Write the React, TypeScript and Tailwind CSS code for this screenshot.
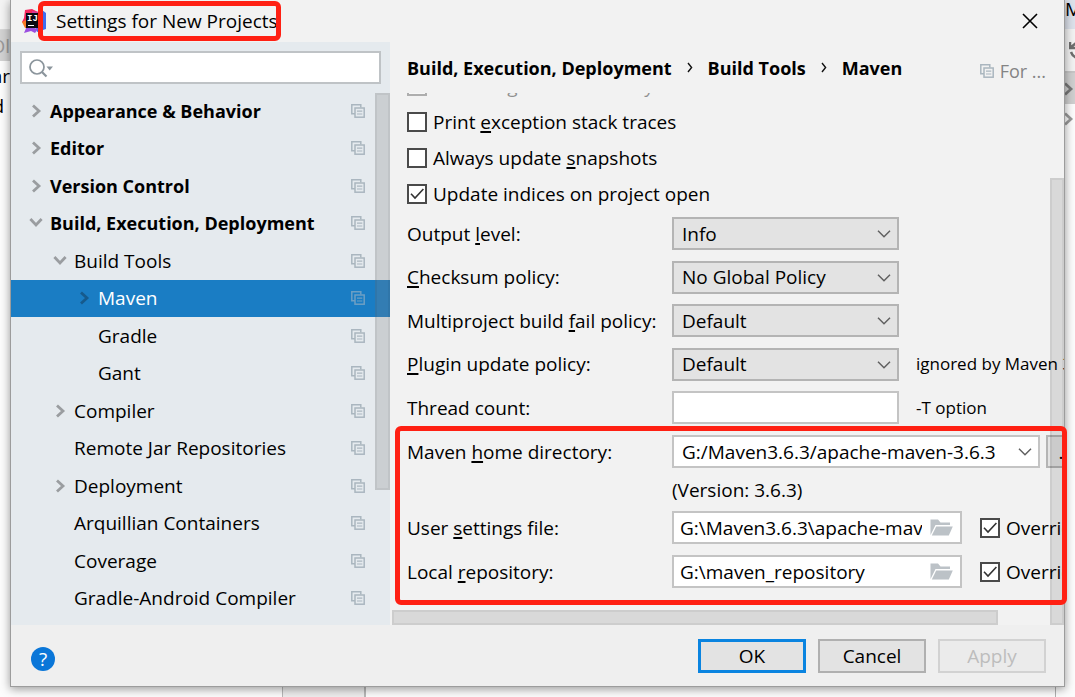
import React from 'react';

const APP_FONT = "font-['Open_Sans','Noto_Sans',sans-serif]";

interface TreeItem {
  label: string;
  level: 0 | 1 | 2;
  arrow?: 'right' | 'down';
  selected?: boolean;
}

const TREE: TreeItem[] = [
  { label: 'Appearance & Behavior', level: 0, arrow: 'right' },
  { label: 'Editor', level: 0, arrow: 'right' },
  { label: 'Version Control', level: 0, arrow: 'right' },
  { label: 'Build, Execution, Deployment', level: 0, arrow: 'down' },
  { label: 'Build Tools', level: 1, arrow: 'down' },
  { label: 'Maven', level: 2, arrow: 'right', selected: true },
  { label: 'Gradle', level: 2 },
  { label: 'Gant', level: 2 },
  { label: 'Compiler', level: 1, arrow: 'right' },
  { label: 'Remote Jar Repositories', level: 1 },
  { label: 'Deployment', level: 1, arrow: 'right' },
  { label: 'Arquillian Containers', level: 1 },
  { label: 'Coverage', level: 1 },
  { label: 'Gradle-Android Compiler', level: 1 },
];

const INDENT = ['pl-[17px]', 'pl-[41px]', 'pl-[65px]'];

const IdeaLogo = () => (
  <svg className="size-6 shrink-0" viewBox="0 0 24 24" aria-hidden="true">
    <path d="M3 1 L10 0 L16 3 L14 8 L5 17 L0 13 L2 9 Z" fill="#f4285f" />
    <path d="M0 13 L6 10 L9 20 L3 19 Z" fill="#fb7a24" />
    <path d="M15 3 L20 1 L24 4 L24 20 L15 23 L12 12 Z" fill="#3f6df0" />
    <path d="M2 24 L5 17 L16 20 L13 24 L9 22 Z" fill="#9b4fe0" />
    <path d="M10 2 L16 3 L18 8 L10 7 Z" fill="#d63c9b" />
    <rect x="4" y="4" width="15" height="15" fill="#0b0a12" />
    <text x="5" y="12" fontSize="9" fontWeight="700" fill="#fff" fontFamily="Liberation Mono, monospace">IJ</text>
    <rect x="6" y="16" width="6" height="1" fill="#fff" />
  </svg>
);

const CopyIcon = ({ className }: { className: string }) => (
  <svg className={`size-3.5 shrink-0 ${className}`} viewBox="0 0 14 14" fill="none" stroke="currentColor" aria-hidden="true">
    <path d="M4 9.8 H0.8 V0.8 H9.8 V3.5" strokeWidth="1.5" />
    <rect x="4" y="4" width="9.2" height="9.2" strokeWidth="1.5" />
    <path d="M6 7.2 H11.3 M6 10 H11.3" strokeWidth="1.2" />
  </svg>
);

const TreeArrow = ({ dir, className }: { dir?: 'right' | 'down'; className: string }) => (
  <svg className={`mr-1.5 size-4 shrink-0 ${className}`} viewBox="0 0 16 16" fill="none" stroke="currentColor" strokeWidth="2.8" aria-hidden="true">
    {dir === 'right' && <path d="M5 2.4 L11 8 L5 13.6" />}
    {dir === 'down' && <path d="M2.4 4 L8 10 L13.6 4" />}
  </svg>
);

const CrumbArrow = () => (
  <svg className="mx-[15px] h-3 w-1.5 shrink-0" viewBox="0 0 6 12" fill="none" stroke="#111" strokeWidth="1.4" aria-hidden="true">
    <path d="M1 1 L4.6 5.5 L1 10" />
  </svg>
);

const ComboChevron = ({ className }: { className: string }) => (
  <svg className={`pointer-events-none absolute top-[13px] h-2 w-3.5 text-[#606060] ${className}`} viewBox="0 0 14 8" fill="none" stroke="currentColor" strokeWidth="1.5" aria-hidden="true">
    <path d="M1 0.8 L7 6.8 L13 0.8" />
  </svg>
);

const FolderIcon = () => (
  <svg className="h-[17px] w-[23px]" viewBox="0 0 23 17" fill="#bcc2c7" aria-hidden="true">
    <path d="M0.5 16 V0.5 H8 L10.5 3.5 H20 V6 H5.5 Z" />
    <path d="M6.2 7.5 H22.8 L18.8 16.5 H1.8 Z" />
  </svg>
);

interface CheckProps {
  id: string;
  checked?: boolean;
  children: React.ReactNode;
  className?: string;
}

const Check: React.FC<CheckProps> = ({ id, checked, children, className = 'h-9' }) => (
  <div className={`flex shrink-0 items-center gap-1.5 ${className}`}>
    <span className="relative size-5 shrink-0">
      <input
        id={id}
        type="checkbox"
        defaultChecked={checked}
        className="peer block size-5 appearance-none border-2 border-[#4a4a4a] bg-white"
      />
      <svg className="pointer-events-none absolute inset-0 hidden size-5 peer-checked:block" viewBox="0 0 20 20" fill="none" stroke="#333" strokeWidth="1.6" aria-hidden="true">
        <path d="M4 9.8 L8 14 L16.4 5" />
      </svg>
    </span>
    <label htmlFor={id} className="whitespace-nowrap">{children}</label>
  </div>
);

// Underlined mnemonic letter
const Key = ({ children }: { children: string }) => (
  <span className="underline decoration-2 underline-offset-2">{children}</span>
);

interface FieldProps {
  id: string;
  label: React.ReactNode;
  children: React.ReactNode;
}

const Field: React.FC<FieldProps> = ({ id, label, children }) => (
  <div className="flex h-[33px] shrink-0 items-center">
    <label htmlFor={id} className="w-[265px] shrink-0 whitespace-nowrap">{label}</label>
    {children}
  </div>
);

const Combo = ({ id, value }: { id: string; value: string }) => (
  <span className="relative w-[227px] shrink-0">
    <select id={id} className="block h-[33px] w-full appearance-none border-2 border-[#b4b4b4] bg-[#e3e3e3] pl-2">
      <option>{value}</option>
    </select>
    <ComboChevron className="right-2" />
  </span>
);

const PathField = ({ id, value }: { id: string; value: string }) => (
  <span className="flex h-[33px] w-[290px] shrink-0 items-center border-2 border-[#c4c4c4] bg-white pr-[7px] pl-1.5">
    <input id={id} type="text" defaultValue={value} className="mr-2 w-0 flex-1 outline-none" />
    <button type="button" aria-label="Browse"><FolderIcon /></button>
  </span>
);

const Sidebar = () => (
  <aside className="relative flex w-[379px] shrink-0 flex-col bg-[#e5eaee] pb-2">
    <div className="mx-[9px] mt-[9px] mb-2 flex h-[33px] shrink-0 items-center border-2 border-[#bfc3c6] bg-white pl-[7px]">
      <svg className="h-5 w-6 shrink-0" viewBox="0 0 24 20" fill="none" stroke="#8b959c" aria-hidden="true">
        <circle cx="8" cy="9" r="7" strokeWidth="1.7" />
        <path d="M13 14 L17.5 18.5" strokeWidth="2.2" />
        <path d="M17.5 8.5 H24 L20.7 12.5 Z" fill="#8b959c" stroke="none" />
      </svg>
      <input type="text" aria-label="Search settings" className="w-0 flex-1 outline-none" />
    </div>
    <ul className="flex flex-1 flex-col">
      {TREE.map((item) => (
        <li
          key={item.label}
          className={`flex flex-1 items-center pr-[25px] whitespace-nowrap ${INDENT[item.level]} ${item.level === 0 ? 'text-lg leading-6 font-bold' : ''} ${item.selected ? 'bg-[#1a7dc4] text-white' : ''}`}
        >
          <TreeArrow dir={item.arrow} className={item.selected ? 'text-[#165a8c]' : 'text-[#9a9da0]'} />
          <span className="flex-1">{item.label}</span>
          <CopyIcon className={item.selected ? 'text-[#6d9fc4]' : 'text-[#aab6bf]'} />
        </li>
      ))}
    </ul>
    <div className="absolute top-[51px] right-0 h-[397px] w-[15px] border-2 border-black/5 bg-[#808080]/25" />
  </aside>
);

const MavenPage = () => (
  <main className="relative flex min-w-0 flex-1 flex-col">
    <div className="flex h-[51px] shrink-0 items-center pr-[18px] pl-[17px] whitespace-nowrap">
      <nav className="flex flex-1 items-center text-lg leading-6 font-bold">
        <span>Build, Execution, Deployment</span>
        <CrumbArrow />
        <span>Build Tools</span>
        <CrumbArrow />
        <span>Maven</span>
      </nav>
      <span className="flex items-center gap-1.5 pt-1.5 text-lg leading-6 text-[#848484]">
        <CopyIcon className="text-[#aab6bf]" />
        For ...
      </span>
    </div>

    <div className="flex min-h-0 flex-1 flex-col overflow-hidden pl-[17px]">
      <div className="-mt-[25px] opacity-40">
        <Check id="recursive">Execute <Key>g</Key>oals recursively</Check>
      </div>
      <Check id="stack">Print <Key>e</Key>xception stack traces</Check>
      <Check id="snapshots">Always update <Key>s</Key>napshots</Check>
      <Check id="indices" checked>Update indices on project open</Check>

      <div className="mt-[5px] flex h-[207px] shrink-0 flex-col justify-between">
        <Field id="output" label={<>Output <Key>l</Key>evel:</>}>
          <Combo id="output" value="Info" />
        </Field>
        <Field id="checksum" label={<><Key>C</Key>hecksum policy:</>}>
          <Combo id="checksum" value="No Global Policy" />
        </Field>
        <Field id="fail" label={<>Multiproject build <Key>f</Key>ail policy:</>}>
          <Combo id="fail" value="Default" />
        </Field>
        <Field id="plugin" label={<><Key>P</Key>lugin update policy:</>}>
          <Combo id="plugin" value="Default" />
          <span className="ml-[17px] text-[17px] whitespace-nowrap">ignored by Maven 3+</span>
        </Field>
        <Field id="threads" label="Thread count:">
          <input id="threads" type="text" className="h-[33px] w-[227px] shrink-0 border-2 border-[#c4c4c4] bg-white px-2 outline-none" />
          <span className="ml-[17px] text-[17px] whitespace-nowrap">-T option</span>
        </Field>
      </div>

      <div className="relative mt-[11px]">
        <Field id="home" label={<>Maven <Key>h</Key>ome directory:</>}>
          <span className="relative w-[368px] shrink-0">
            <select id="home" className="block h-[33px] w-full appearance-none border-2 border-[#c4c4c4] bg-white pl-2">
              <option>G:/Maven3.6.3/apache-maven-3.6.3</option>
            </select>
            <ComboChevron className="right-2" />
          </span>
          <button type="button" className="ml-1.5 h-[33px] w-10 shrink-0 border-2 border-[#b4b4b4] bg-[#e3e3e3]">...</button>
        </Field>
        <p className="flex h-[43px] items-center pl-[265px]">(Version: 3.6.3)</p>
        <Field id="settings" label={<>User <Key>s</Key>ettings file:</>}>
          <PathField id="settings" value="G:\Maven3.6.3\apache-maven-3.6.3\conf\settings.xml" />
          <Check id="override-settings" checked className="ml-[18px]">Override</Check>
        </Field>
        <div className="mt-[11px]">
          <Field id="repo" label={<>Local <Key>r</Key>epository:</>}>
            <PathField id="repo" value="G:\maven_repository" />
            <Check id="override-repo" checked className="ml-[18px]">Override</Check>
          </Field>
        </div>
      </div>
    </div>

    {/* scrollbars float over the page */}
    <div className="absolute top-[136px] right-0 bottom-0 w-3.5 border-2 border-black/5 bg-black/10" />
    <div className="absolute right-[66px] bottom-0 left-0.5 h-[15px] border-2 border-black/5 bg-black/10" />
    <div className="pointer-events-none absolute -right-[3px] bottom-5 left-[5px] h-[179px] rounded-md border-[5px] border-[#ff2013]" />
  </main>
);

const Footer = () => (
  <footer className="flex h-[61px] shrink-0 items-center gap-3 bg-[#efefef] pr-[18px] pl-5">
    <button type="button" aria-label="Help" className="mt-1.5 flex size-6 items-center justify-center rounded-full bg-[#0a76d8] text-white">?</button>
    <span className="flex-1" />
    <button type="button" className="h-[34px] w-[108px] border-3 border-[#0a84e0] bg-[#e3e3e3]">OK</button>
    <button type="button" className="h-[34px] w-[108px] border-2 border-[#b0b0b0] bg-[#e3e3e3]">Cancel</button>
    <button type="button" disabled className="h-[34px] w-[108px] border-2 border-[#d2d2d2] bg-[#ebebeb] text-[#bdbdbd]">Apply</button>
  </footer>
);

// Slivers of the IDE window that stay visible round the dialog
const LeftEdge = () => (
  <div className="flex w-2.5 shrink-0 flex-col overflow-hidden bg-[#fcfcfc]">
    <div className="h-[30px] shrink-0 border-b border-[#d8d8d8] bg-[#f4f4f4]" />
    <div className="flex h-[31px] shrink-0 items-center justify-end bg-[#d2d2d2] text-[#999]">Ol</div>
    <div className="flex h-[30px] shrink-0 items-center justify-end">ar</div>
    <div className="flex h-[30px] shrink-0 items-center justify-end pr-1.5">d</div>
  </div>
);

const RightEdge = () => (
  <div className="flex w-2.5 shrink-0 flex-col overflow-hidden bg-[#fcfcfc]">
    <div className="flex h-[29px] shrink-0 bg-[#dce1ea] pt-px leading-4">M</div>
    <div className="flex h-[44px] shrink-0 items-center border-b-2 border-[#c6c6c6] bg-[#f2f2f2]">
      <svg className="ml-1 h-5 w-3 shrink-0" viewBox="0 0 12 20" fill="none" stroke="#6e6e6e" strokeWidth="2.5" aria-hidden="true">
        <path d="M1 2 V8 H8 M1 8 L7 3 M2 12 C3 15 5 17 8 18" />
      </svg>
    </div>
    <div className="flex h-[31px] shrink-0 items-center bg-[#cfcfcf]">
      <TreeArrow dir="right" className="-ml-[5px] text-[#777]" />
    </div>
    <div className="flex h-[30px] shrink-0 items-center">
      <TreeArrow dir="right" className="-ml-[5px] text-[#999]" />
    </div>
  </div>
);

export default function App() {
  return (
    <div className={`flex min-h-screen flex-col overflow-hidden bg-[#fcfcfc] text-[19px] leading-6 text-black ${APP_FONT}`}>
      <div className="flex flex-1">
        <LeftEdge />
        <div className="z-10 flex min-w-0 flex-1 flex-col border border-t-0 border-[#9c9c9c] bg-[#f2f2f2] shadow-[0_2px_9px_rgba(0,0,0,0.4)]">
          <header className="relative flex h-[42px] shrink-0 items-center pr-[25px] pl-[11px]">
            <IdeaLogo />
            <h1 className="flex-1 pl-2.5">Settings for New Projects</h1>
            <button type="button" aria-label="Close">
              <svg className="size-[18px]" viewBox="0 0 18 18" fill="none" stroke="#000" strokeWidth="1.6" aria-hidden="true">
                <path d="M2 2 L16 16 M16 2 L2 16" />
              </svg>
            </button>
            <div className="pointer-events-none absolute top-px left-[27px] h-10 w-[243px] rounded-md border-[5px] border-[#ff2013]" />
          </header>
          <div className="flex flex-1">
            <Sidebar />
            <MavenPage />
          </div>
          <Footer />
        </div>
        <RightEdge />
      </div>
      <div className="flex h-2.5 shrink-0">
        <div className="ml-[282px] w-[84px] border-r-2 border-l border-[#b8b8b8] bg-[#ededed]" />
        <div className="flex-1" />
        <div className="mr-[19px] w-px bg-[#b0b0b0]" />
      </div>
    </div>
  );
}
